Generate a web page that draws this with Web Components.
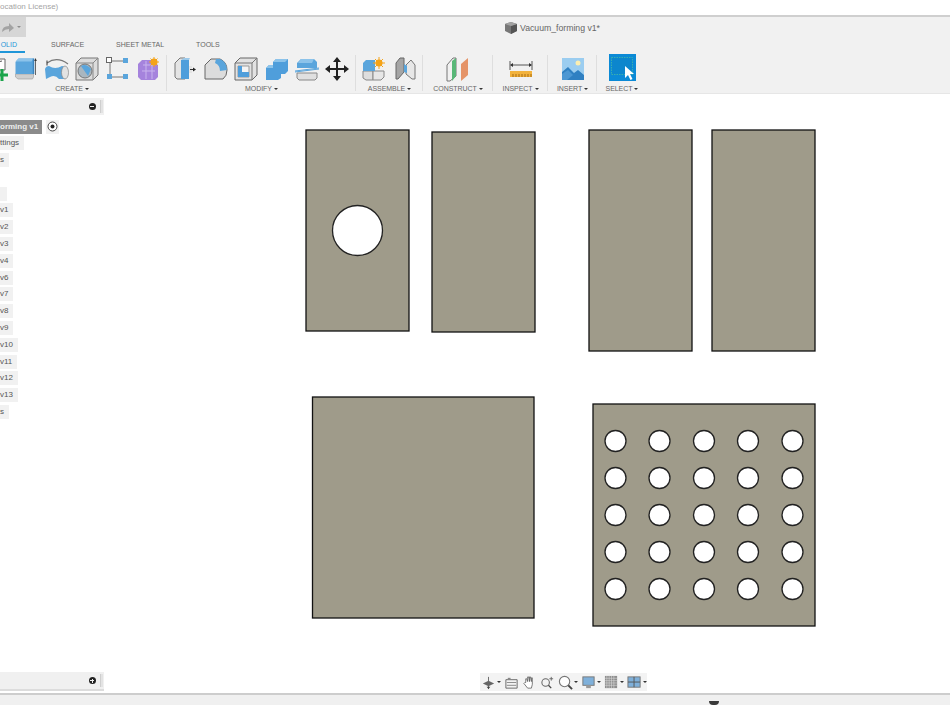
<!DOCTYPE html>
<html>
<head>
<meta charset="utf-8">
<title>Vacuum_forming v1</title>
<style>
    html, body { margin: 0; height: 100%; overflow: hidden; background: #fff; }
    body { font-family: "Liberation Sans", Arial, sans-serif; color: #555; }
    cad-app { height: 705px; }
</style>
</head>
<body>
<cad-app></cad-app>

<script>
const ICONS = {
    component: `<path d="M8 2h13v11H8z" fill="#fff" stroke="#666"/><path d="M15 11V6q0-2 3-2" fill="none" stroke="#555"/>
        <path d="M16.500 12h3v4.500H24v3h-4.500V24h-3v-4.500H12v-3h4.500z" fill="#1aa34a"/>`,
    extrude: `<path d="M1.500 17h18v3l-1 2H4l-2.500-2z" fill="#cfcfcf" stroke="#999" stroke-width=".6"/><path d="M1.500 5l3-3.500h15V17h-18z" fill="#5aa5dc"/><path d="M4.500 1.500h15l-2 3H1.500z" fill="#8cc3ea"/><path d="M19.500 1.500V17" stroke="#3a83bd" stroke-width="1.500"/>
        <path d="M21.500 3v15" stroke="#666"/><path d="M20.200 4l1.300-3 1.300 3z" fill="#333"/>`,
    sweep: `<path d="M2 6Q12-1 23 7" fill="none" stroke="#777" stroke-width="1.200"/><path d="M2 3.500v5" stroke="#333"/>
        <path d="M0 12q1-3 4-3q6 4 13 0l5 1q2 6-2 12h-6q-4-5-9-2l-4 2z" fill="#5aa5dc"/><ellipse cx="20" cy="15.500" rx="3.500" ry="6.500" fill="#e3e3e3" stroke="#888" stroke-width=".7"/>`,
    hole: `<path d="M1 6l5-5h17v17l-5 5H1z" fill="#dcdcdc" stroke="#777"/><path d="M1 6h17v17M18 6l5-5" fill="none" stroke="#888"/>
        <circle cx="10" cy="14" r="7" fill="#a9b6bf" stroke="#777"/><path d="M6 9q5-3 10 3l-3 7z" fill="#5aa5dc"/>`,
    pattern: `<path d="M5 4h12M4 6v14M6 20h11" stroke="#777" fill="none"/><rect x=".500" y=".500" width="5" height="5" fill="#fff" stroke="#666"/>
        <rect x="17" y="1" width="5" height="5" fill="#5aa5dc"/><rect x="1" y="17" width="5" height="5" fill="#5aa5dc"/><rect x="17" y="17" width="5" height="5" fill="#5aa5dc"/>`,
    form: `<path d="M2 7l4-4h10l6 5v12l-3 3H5l-3-3z" fill="#a583dd"/><path d="M7 8h11M6 14h13M10 4v18M16 5v17" stroke="#c9b4ee" fill="none"/>
        <circle cx="18" cy="5" r="3.500" fill="#f4a318"/><path d="M18 0v10M13 5h10M14.500 1.500l7 7M21.500 1.500l-7 7" stroke="#f4a318"/>`,
    press: `<path d="M1 6l5-5h5v21H3l-2-2z" fill="#e4e4e4" stroke="#777"/><path d="M7 3h8v19H7z" fill="#4f9edb"/><path d="M7 3l3-2h6l-1 2z" fill="#9cc9ea"/><path d="M15 9h3v7h-3z" fill="#e4e4e4"/><path d="M16 12.500h4" stroke="#333"/><path d="M19 10.500l3 2-3 2z" fill="#222"/>`,
    fillet: `<path d="M1 8l6-6h9q7 3 7 11q0 6-4 9H1z" fill="#dcdcdc" stroke="#666"/><path d="M12 2h4q7 3 7 11l-7 1q0-6-5-8z" fill="#5aa5dc"/>`,
    shell: `<path d="M1 6l5-5h17v17l-5 5H1z" fill="#e2e2e2" stroke="#666"/><path d="M1 6h17v17M18 6l5-5" fill="none" stroke="#777"/><path d="M4 9h11v11H4z" fill="#f4f4f4" stroke="#999"/>
        <path d="M4 9h4v6h7v5H4z" fill="#4f9edb"/>`,
    combine: `<path d="M8 5l3-3h12v12l-3 3h-4v4l-3 2H1V11l3-3h4z" fill="#4f9edb"/><path d="M8 5l3-3h12l-3 3zM1 11l3-3h4v3z" fill="#8cc3ea"/>`,
    split: `<path d="M2 6l4-4h13l3 3v6H2z" fill="#5aa5dc"/><path d="M6 2h13l-2 4H3z" fill="#8cc3ea"/><path d="M2 16h20v5l-2 2H4l-2-2z" fill="#e0e0e0" stroke="#888"/>
        <path d="M0 14l24-3M0 15l24-3" stroke="#5aa5dc"/>`,
    move: `<path d="M11 4h2v7h7v2h-7v7h-2v-7H4v-2h7z" fill="#222"/><path d="M12 0l4 5H8zM12 24l-4-5h8zM0 12l5-4v8zM24 12l-5 4V8z" fill="#222"/>`,
    newcomp: `<path d="M1 14h10v9H4l-3-2z" fill="#dedede" stroke="#888"/><path d="M11 14h11v6l-3 3h-8z" fill="#e7e7e7" stroke="#888"/>
        <path d="M1 6l3-3h9v11H1z" fill="#5aa5dc"/><circle cx="17" cy="6" r="3.500" fill="#f4a318"/><path d="M17 0v12M11 6h12M13 2l8 8M21 2l-8 8" stroke="#f4a318"/>`,
    joint: `<path d="M3 6l4-5h4v14l-6 7H3z" fill="#a5a5a5" stroke="#666"/><path d="M13 8l5-5 4 5v14l-3 0-6-5z" fill="#e7e7e7" stroke="#777"/><path d="M11 7l3 2v7l-3-1z" fill="#5aa5dc"/>`,
    plane: `<path d="M1 8l6-7h3v18l-6 5H1z" fill="#f1f1f1" stroke="#777"/><path d="M6 4l4-3v18l-4 5z" fill="#59b778"/><path d="M15 7l7-6v17l-7 6z" fill="#e59468"/>`,
    measure: `<path d="M1 4v9M23 4v9" stroke="#555"/><path d="M2 8h20" stroke="#555"/><path d="M1 8l3-2v4zM23 8l-3-2v4z" fill="#333"/>
        <rect x="1" y="14" width="22" height="6" fill="#f2b23c"/><path d="M4 17v3M7 17v3M10 17v3M13 17v3M16 17v3M19 17v3M22 17v3" stroke="#a86d10"/>`,
    canvas: `<rect x="1" y="1" width="22" height="22" fill="#9bcdf0"/><path d="M1 23V15l6-5 6 6 4-3 6 5v5z" fill="#2f80c2"/><path d="M1 17l6-4 5 5-6 5H1z" fill="#4c97d3"/><circle cx="17" cy="6" r="2.500" fill="#fbeeb0"/>`,
    select: `<rect width="27" height="27" fill="#0b8ad6"/><rect x="2.500" y="3.500" width="21" height="17" fill="#0c86cd" stroke="#46b9a6" stroke-width=".8" stroke-dasharray="1.500 1"/>
        <path d="M16 12l0 12 3-3 2.500 5 2-1-2.500-5h4z" fill="#fff"/>`,
    origin: `<path d="M8 2v13" stroke="#666" fill="none"/><path d="M2 9l6-3 6 3-6 3z" fill="#666"/><path d="M8 15l-2-2.500h4z" fill="#444"/>`,
    capture: `<path d="M2 5h12v9H2z" fill="none" stroke="#666"/><path d="M4 3h3v2H4z" fill="#888"/><path d="M3 8h10M3 11h10" stroke="#888"/>`,
    hand: `<path d="M4 8V4l1 0 1 3V2h1l1 5V2h1l1 5V3h1v7l-1 4H6L2 9l1-1z" fill="#fff" stroke="#555" stroke-width=".8"/>`,
    zoomfit: `<circle cx="6" cy="8" r="4" fill="none" stroke="#666" stroke-width="1.100"/><path d="M9 11l3 3" stroke="#444" stroke-width="1.400"/><path d="M12 2v4M10 4h4" stroke="#666"/>`,
    zoom: `<circle cx="7" cy="7" r="5.500" fill="#fff" stroke="#777" stroke-width="1.200"/><path d="M11 11l4 4" stroke="#444" stroke-width="2"/>`,
    display: `<rect x="2" y="2" width="12" height="9" fill="#7fb0da" stroke="#777"/><path d="M5.500 11h5v3h-5z" fill="#999"/>`,
    grid: `<rect x="1" y="1" width="13" height="13" fill="#8e8e8e"/><path d="M3 1v13M5.500 1v13M8 1v13M10.500 1v13M1 3.500h13M1 6h13M1 8.500h13M1 11h13" stroke="#dcdcdc" stroke-width=".6"/>`,
    views: `<rect x="1" y="2" width="13" height="11" fill="#7fb0da" stroke="#777"/><path d="M7.500 2v11M1 7.500h13" stroke="#555"/>`,
    cube: `<path d="M6 0l6 2v7l-6 3-6-3V2z" fill="#777"/><path d="M6 4l6-2v7l-6 3z" fill="#555"/><path d="M0 2l6-2 6 2-6 2z" fill="#a2a2a2"/>`,
    redo: `<path d="M1 11q0-6 7-6V2l5 5-5 4V8q-4 0-7 3z" fill="#a3a3a3"/>`
};

class ToolIcon extends HTMLElement {
    connectedCallback() {
        const size = this.getAttribute("size") || 24;
        const box = this.getAttribute("box") || size;
        this.attachShadow({mode: "open"}).innerHTML = `
        <style>
            :host { display: block; flex: none; width: ${size}px; height: ${size}px; }
            svg { display: block; overflow: visible; }
        </style>
        <svg width="${size}" height="${size}" viewBox="0 0 ${box} ${box}">${ICONS[this.getAttribute("name")]}</svg>`;
    }
}
customElements.define("tool-icon", ToolIcon);

class TitleStrip extends HTMLElement {
    connectedCallback() {
        this.attachShadow({mode: "open"}).innerHTML = `
        <style>
            :host { display: block; height: 15px; background: #fff; border-bottom: 2px solid #cfcfcf; font-size: 8px; color: #a4a4a4; line-height: 13px; overflow: hidden; }
        </style>
        <slot></slot>`;
    }
}
customElements.define("title-strip", TitleStrip);

class ToolGroup extends HTMLElement {
    connectedCallback() {
        const w = this.getAttribute("w");
        this.attachShadow({mode: "open"}).innerHTML = `
        <style>
            :host { display: flex; flex: none; flex-direction: column; align-items: center; width: ${w}px; position: relative; }
            :host([sep])::after { content: ""; position: absolute; right: 0; top: 0; bottom: 3px; width: 1px; background: #dedede; }
            .icons { display: flex; gap: var(--gap, 6.400px); height: 27px; align-items: center; }
            .label { margin-top: 2px; font-size: 7px; line-height: 10px; color: #666; letter-spacing: -.05px; white-space: nowrap; }
            .label i { display: inline-block; margin-left: 2px; vertical-align: 1.500px; border: 2px solid transparent; border-top: 2.500px solid #333; border-bottom: 0; }
        </style>
        <div class="icons"><slot></slot></div>
        <div class="label">${this.getAttribute("label")}<i></i></div>`;
    }
}
customElements.define("tool-group", ToolGroup);

class ToolRibbon extends HTMLElement {
    connectedCallback() {
        this.attachShadow({mode: "open"}).innerHTML = `
        <style>
            :host { display: block; height: 77px; background: #f1f1f1; border-bottom: 1px solid #e6e6e6; box-sizing: border-box; overflow: hidden; position: relative; }
            .top { display: flex; height: 20px; }
            .qat { width: 25.500px; height: 20px; background: #d6d6d6; display: flex; align-items: center; gap: 3px; padding-left: 1px; box-sizing: border-box; }
            .qat i { border: 2px solid transparent; border-top: 2.500px solid #8d8d8d; border-bottom: 0; }
            .doc { position: absolute; left: 505px; top: 5px; display: flex; align-items: center; gap: 3px; font-size: 8.700px; line-height: 13px; color: #666; white-space: nowrap; }
            .doc tool-icon { margin-top: -1px; }
            .tabs { display: flex; height: 16px; font-size: 7px; line-height: 15px; color: #666; box-sizing: border-box; margin-left: -8px; }
            .tabs span { padding: 0 0 0 8px; box-sizing: border-box; white-space: nowrap; }
            .tabs .on { width: 33px; color: #1f96d8; border-bottom: 2px solid #1f96d8; height: 16px; overflow: hidden; direction: rtl; padding: 0 8px 0 0; }
            .groups { display: flex; margin-left: -23px; padding-top: 2px; }
            .select { margin: -1px 0 1px 1px; }
        </style>
        <div class="top">
            <div class="qat"><tool-icon name="redo" size="13" box="13"></tool-icon><i></i></div>
        </div>
        <div class="doc"><tool-icon name="cube" size="12" box="12"></tool-icon>Vacuum_forming v1*</div>
        <div class="tabs">
            <span class="on">OLID</span>
            <span style="margin-left:18px">SURFACE</span>
            <span style="margin-left:24px">SHEET METAL</span>
            <span style="margin-left:24px">TOOLS</span>
        </div>
        <div class="groups">
            <tool-group w="190" sep label="CREATE">
                <tool-icon name="component"></tool-icon><tool-icon name="extrude"></tool-icon><tool-icon name="sweep"></tool-icon>
                <tool-icon name="hole"></tool-icon><tool-icon name="pattern"></tool-icon><tool-icon name="form"></tool-icon>
            </tool-group>
            <tool-group w="189" sep label="MODIFY">
                <tool-icon name="press"></tool-icon><tool-icon name="fillet"></tool-icon><tool-icon name="shell"></tool-icon>
                <tool-icon name="combine"></tool-icon><tool-icon name="split"></tool-icon><tool-icon name="move"></tool-icon>
            </tool-group>
            <tool-group w="67" sep label="ASSEMBLE" style="--gap:7px">
                <tool-icon name="newcomp"></tool-icon><tool-icon name="joint"></tool-icon>
            </tool-group>
            <tool-group w="70" sep label="CONSTRUCT"><tool-icon name="plane"></tool-icon></tool-group>
            <tool-group w="55" sep label="INSPECT"><tool-icon name="measure"></tool-icon></tool-group>
            <tool-group w="49" sep label="INSERT"><tool-icon name="canvas"></tool-icon></tool-group>
            <tool-group w="50" label="SELECT"><tool-icon class="select" name="select" size="27" box="27"></tool-icon></tool-group>
        </div>`;
    }
}
customElements.define("tool-ribbon", ToolRibbon);

class PanelBar extends HTMLElement {
    connectedCallback() {
        const sign = this.getAttribute("sign");
        this.attachShadow({mode: "open"}).innerHTML = `
        <style>
            :host { display: flex; flex: none; align-items: center; justify-content: flex-end; height: 17px; width: 104px; background: #f0f0f0; box-sizing: border-box; padding-right: 1px; gap: 4.500px; }
            .btn { width: 7px; height: 7px; border-radius: 50%; background: #222; position: relative; }
            .btn::after { content: ""; position: absolute; left: 1.500px; top: 3px; width: 4px; height: 1px; background: #eee; }
            .btn.plus::before { content: ""; position: absolute; left: 3px; top: 1.500px; width: 1px; height: 4px; background: #eee; }
            .grip { width: 3px; height: 13px; background: #e3e3e3; border-left: 1px solid #cfcfcf; box-sizing: border-box; }
        </style>
        <span class="btn ${sign === "+" ? "plus" : ""}"></span><span class="grip"></span>`;
    }
}
customElements.define("panel-bar", PanelBar);

class TreeRow extends HTMLElement {
    connectedCallback() {
        this.attachShadow({mode: "open"}).innerHTML = `
        <style>
            :host { display: block; height: 16.800px; }
            .pill { display: inline-block; height: 14px; line-height: 14px; padding-right: 5px; background: #f1f1f1; font-size: 8px; color: #555; white-space: nowrap; vertical-align: top; }
            :host([active]) .pill { background: #8b8b8b; color: #eee; font-weight: bold; padding-right: 4px; }
        </style>
        <span class="pill"><slot></slot></span>`;
    }
}
customElements.define("tree-row", TreeRow);

class BrowserPanel extends HTMLElement {
    connectedCallback() {
        const names = ["v1", "v2", "v3", "v4", "v6", "v7", "v8", "v9", "v10", "v11", "v12", "v13"];
        this.attachShadow({mode: "open"}).innerHTML = `
        <style>
            :host { position: absolute; left: 0; top: 4px; bottom: 2px; width: 104px; display: flex; flex-direction: column; }
            .tree { flex: 1; padding-top: 4.500px; }
            .root { display: flex; align-items: flex-start; gap: 4px; }
            .target { width: 13px; height: 14px; background: #f1f1f1; display: flex; align-items: center; justify-content: center; }
            .target svg { display: block; }
            .foot { height: 19px; border-bottom: 2px solid #dcdcdc; }
        </style>
        <panel-bar sign="-"></panel-bar>
        <div class="tree">
            <div class="root"><tree-row active>orming v1</tree-row>
                <span class="target"><svg width="11" height="11" viewBox="0 0 11 11"><circle cx="5.500" cy="5.500" r="4.500" fill="#fff" stroke="#444"/><circle cx="5.500" cy="5.500" r="2" fill="#222"/></svg></span>
            </div>
            <tree-row>ttings</tree-row>
            <tree-row>s</tree-row>
            <tree-row style="visibility:hidden">&nbsp;</tree-row>
            <tree-row>&nbsp;</tree-row>
            ${names.map(n => `<tree-row>${n}</tree-row>`).join("")}
            <tree-row>s</tree-row>
        </div>
        <panel-bar class="foot" sign="+"></panel-bar>`;
    }
}
customElements.define("browser-panel", BrowserPanel);

class NavBar extends HTMLElement {
    connectedCallback() {
        const item = (name, arrow) => `<span class="it"><tool-icon name="${name}" size="15" box="16"></tool-icon>${arrow ? "<i></i>" : ""}</span>`;
        this.attachShadow({mode: "open"}).innerHTML = `
        <style>
            :host { position: absolute; left: 480px; bottom: 2px; width: 167px; height: 18px; background: #f3f3f3; display: flex; align-items: center; gap: 3px; box-sizing: border-box; padding-left: 1px; }
            .it { display: flex; align-items: center; gap: 1px; }
            i { border: 2px solid transparent; border-top: 2.500px solid #333; border-bottom: 0; }
        </style>
        ${item("origin", true)}${item("capture")}${item("hand")}${item("zoomfit")}${item("zoom", true)}${item("display", true)}${item("grid", true)}${item("views", true)}`;
    }
}
customElements.define("nav-bar", NavBar);

class SketchCanvas extends HTMLElement {
    connectedCallback() {
        // coordinates are relative to the canvas area, which starts at y=94
        const top = 94;
        const plate = (x, y, w, h) => `<rect x="${x}" y="${y - top}" width="${w}" height="${h}"/>`;
        const hole = (x, y, r) => `<circle class="hole" cx="${x}" cy="${y - top}" r="${r}"/>`;
        let holes = "";
        for (const y of [441, 478, 515, 552, 589]) {
            for (const x of [615.5, 659.5, 704, 748, 792.5]) holes += hole(x, y, 10.5);
        }
        this.attachShadow({mode: "open"}).innerHTML = `
        <style>
            :host { display: block; position: relative; flex: 1; background: #fff; overflow: hidden; }
            svg { display: block; }
            rect { fill: #9f9b8a; stroke: #111; stroke-width: 1.300; }
            .hole { fill: #fff; stroke: #222; stroke-width: 1.300; }
        </style>
        <svg width="950" height="599" viewBox="0 0 950 599">
            ${plate(306, 130, 103, 201)}${hole(357.5, 230.5, 25)}
            ${plate(432, 132, 103, 200)}
            ${plate(589, 130, 103, 221)}
            ${plate(712, 130, 103, 221)}
            ${plate(312.5, 397, 221.5, 221)}
            ${plate(593, 404, 222, 222)}
            ${holes}
        </svg>
        <browser-panel></browser-panel>
        <nav-bar></nav-bar>`;
    }
}
customElements.define("sketch-canvas", SketchCanvas);

class StatusStrip extends HTMLElement {
    connectedCallback() {
        this.attachShadow({mode: "open"}).innerHTML = `
        <style>
            :host { display: block; height: 12px; background: #f0f0f0; border-top: 2px solid #cdcdcd; box-sizing: border-box; position: relative; }
            .mark { position: absolute; left: 709px; bottom: 0; width: 10px; height: 4px; background: #3a3a3a; border-radius: 0 0 4px 4px; }
        </style>
        <span class="mark"></span>`;
    }
}
customElements.define("status-strip", StatusStrip);

class CadApp extends HTMLElement {
    connectedCallback() {
        this.attachShadow({mode: "open"}).innerHTML = `
        <style>
            :host { display: flex; flex-direction: column; width: 950px; }
        </style>
        <title-strip>ocation License)</title-strip>
        <tool-ribbon></tool-ribbon>
        <sketch-canvas></sketch-canvas>
        <status-strip></status-strip>`;
    }
}
customElements.define("cad-app", CadApp);
</script>
</body>
</html>
